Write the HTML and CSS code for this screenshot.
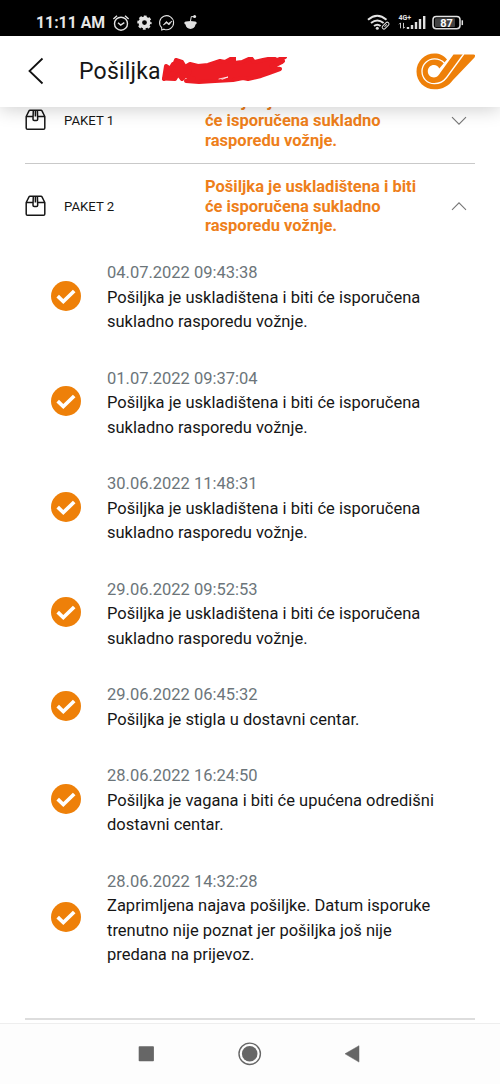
FILE: index.html
```html
<!DOCTYPE html>
<html lang="hr">
<head>
<meta charset="utf-8">
<title>Pošiljka</title>
<link rel="stylesheet" href="styles.css">
</head>
<body>
<svg class="defs" width="0" height="0">
  <symbol id="box" viewBox="0 0 22 22"><path d="M1.2 7.5 4 1.9q.3-.6 1-.6h11q.7 0 1 .6l2.8 5.6v11.5q0 1.3-1.3 1.3h-16q-1.3 0-1.3-1.3zM1.2 7.6h6.9M12.8 7.6h7M8.3 1.5 8 10.2q0 1.2 1.2 1.2h2.3q1.2 0 1.2-1.2L12.4 1.5M10.4 1.5v6" fill="none" stroke="#161616" stroke-width="1.5" stroke-linejoin="round"/></symbol>
  <symbol id="check" viewBox="0 0 30 30"><circle cx="15" cy="15" r="15" fill="#ee8009"/><path d="m6.7 15.2 5.6 5.3L23.2 10" fill="none" stroke="#fff" stroke-width="3.7"/></symbol>
</svg>
<div class="screen">
  <div class="status">
    <span class="clock">11:11 AM</span>
    <svg class="status-left" width="88" height="18" viewBox="0 0 88 18" fill="none" stroke="#e4e4e4">
      <circle cx="9" cy="9.7" r="6.5" stroke-width="1.4"/><path d="m6 8.8 2.7 2.3 3.6-2.5M1.4 5 5 1.8M13 1.8 16.6 5" stroke-width="1.4"/>
      <circle cx="32.5" cy="8.6" r="4.2" stroke-width="3.6"/><circle cx="32.5" cy="8.6" r="6.2" stroke-width="2" stroke-dasharray="2.8 2.07" stroke-dashoffset="1.4"/>
      <path d="M49.7 16v-2.3A7 7 0 1 1 52 15.2z" stroke-width="1.1"/><path d="m51.3 11 3-3.5 2.3 1.8 3.4-2.2-3 3.8-2.3-1.8z" fill="#e4e4e4" stroke-width=".7"/>
      <path d="M72.3 9q0-1.7 1.7-1.6 4.5-1 9 0 1.700-.1 1.700 1.600-.2 1.200-1.200 1.500-.9 4.400-5 4.400t-5-4.400q-1-.3-1.200-1.500z" fill="#e4e4e4" stroke="none"/><circle cx="82.600" cy="2.600" r="1.500" fill="#e4e4e4" stroke="none"/><path d="m78.500 7 .8-4.500 3 .3"/>
    </svg>
    <svg class="status-right" width="100" height="18" viewBox="0 0 100 18" fill="none" stroke="#e4e4e4">
      <path d="M1 5.700q9.200-8 18.500 0M4 9q6.300-5 12.600 0M7 12q3.300-2.600 6.600 0" stroke-width="2"/><circle cx="10.300" cy="14.200" r="1.500" fill="#e4e4e4" stroke="none"/>
      <g transform="rotate(-45 18.600 11.600)"><rect x="14.600" y="9.900" width="8" height="3.400" rx="1.500" fill="#000" stroke-width="1"/><path d="M17 11.600h3.200"/></g>
      <text x="31.500" y="5.800" class="network">4G+</text>
      <path d="M33.500 8.900v5.400m-1.400-4 1.400-1.400M36.500 8.900v5.400l1.400-1.400" stroke-width=".9"/>
      <path d="M41 15v-2M45 15v-4M49 15V8M53 15V5M57.200 15V2" stroke-width="2.400"/>
      <rect x="66" y="2.400" width="27" height="12.400" rx="3.200" stroke-width="1.500"/><rect x="68" y="4.300" width="20" height="8.600" rx="1" fill="#444" stroke="none"/><path d="M95.300 6.300v4.800" stroke-width="1.500"/>
      <text x="79.500" y="12.500" class="battery">87</text>
    </svg>
  </div>
  <header class="header">
    <svg class="back" width="16" height="28" viewBox="0 0 16 28"><path d="M14.500 1.500 1.500 14l13 12.500" fill="none" stroke="#111" stroke-width="1.800"/></svg>
    <h1 class="title">Pošiljka</h1>
    <svg class="scribble" width="126" height="32" viewBox="0 0 126 32" fill="#ed1c24" stroke="#ed1c24" stroke-linecap="round" stroke-linejoin="round" stroke-width="4"><path d="M3 21.500 5 9l6 4 4-10 6 2 3 5 5-3 8 2 10-1 12-4 5 1 9-5 0 6 8-1 9-4 3 4 9-2 10-2 4 2 8-3-9 5 6 0-10 5 8 2-11 4-8 3-13 3-5-1-10 2-18 1-16 1-13-1 8-2-6-2 2-6-8 8-4-5-3 5z"/><path d="m3 22 9-15M110 9l12-5"/><path d="M58 22l9-2-6 2.300" stroke="#fff" stroke-width=".8"/></svg>
    <svg class="logo" width="60" height="37" viewBox="0 0 60 37"><path d="M31 6.500C27.500 2.300 23.800.5 18.500.5A17.800 17.800 0 0 0 .5 18.500c0 10 7.800 17.800 18 17.800 8.400 0 14.200-3.500 18.500-9.300L58.500 4.500q1.500-3-1-3H37.500L25.200 18.500c-2 3-4 6-7.200 6-3.500 0-6.200-2.700-6.200-6.200s2.700-6.200 6.200-6.200c2.400 0 4.300 1.200 5.300 3.400z" fill="#ee8009"/><path d="M28.500 10.200C25.700 7 22.500 5.900 18.500 5.900A12.500 12.500 0 0 0 6 18.300c0 7 5.200 12.400 12.300 12.400 5.700 0 9.500-2.500 12.300-6.200L47.800 1" fill="none" stroke="#fff" stroke-width="1.300"/></svg>
  </header>
  <main class="content">
    <section class="package package-first">
      <svg class="box"><use href="#box"/></svg><span class="name">PAKET 1</span>
      <p class="state">Pošiljka je uskladištena i biti<br>će isporučena sukladno<br>rasporedu vožnje.</p>
      <svg class="chevron" viewBox="0 0 16 10"><path d="m1 1.200 7 7 7-7"/></svg>
    </section>
    <section class="package">
      <svg class="box"><use href="#box"/></svg><span class="name">PAKET 2</span>
      <p class="state">Pošiljka je uskladištena i biti<br>će isporučena sukladno<br>rasporedu vožnje.</p>
      <svg class="chevron" viewBox="0 0 16 10"><path d="m1 8.800 7-7 7 7"/></svg>
    </section>
    <ol class="timeline">
      <li class="event"><svg class="check"><use href="#check"/></svg><div><time>04.07.2022 09:43:38</time><p>Pošiljka je uskladištena i biti će isporučena<br>sukladno rasporedu vožnje.</p></div></li>
      <li class="event"><svg class="check"><use href="#check"/></svg><div><time>01.07.2022 09:37:04</time><p>Pošiljka je uskladištena i biti će isporučena<br>sukladno rasporedu vožnje.</p></div></li>
      <li class="event"><svg class="check"><use href="#check"/></svg><div><time>30.06.2022 11:48:31</time><p>Pošiljka je uskladištena i biti će isporučena<br>sukladno rasporedu vožnje.</p></div></li>
      <li class="event"><svg class="check"><use href="#check"/></svg><div><time>29.06.2022 09:52:53</time><p>Pošiljka je uskladištena i biti će isporučena<br>sukladno rasporedu vožnje.</p></div></li>
      <li class="event"><svg class="check"><use href="#check"/></svg><div><time>29.06.2022 06:45:32</time><p>Pošiljka je stigla u dostavni centar.</p></div></li>
      <li class="event"><svg class="check"><use href="#check"/></svg><div><time>28.06.2022 16:24:50</time><p>Pošiljka je vagana i biti će upućena odredišni<br>dostavni centar.</p></div></li>
      <li class="event"><svg class="check"><use href="#check"/></svg><div><time>28.06.2022 14:32:28</time><p>Zaprimljena najava pošiljke. Datum isporuke<br>trenutno nije poznat jer pošiljka još nije<br>predana na prijevoz.</p></div></li>
    </ol>
  </main>
  <nav class="nav">
    <svg width="500" height="60" viewBox="0 0 500 60" fill="#666"><rect x="138.700" y="22.300" width="15.200" height="15" rx=".8"/><circle cx="249.700" cy="29.800" r="7.800"/><circle cx="249.700" cy="29.800" r="10.700" fill="none" stroke="#666" stroke-width="1.400"/><path d="M345 29.800 359 21.700v16.400z" stroke="#666" stroke-width=".5"/></svg>
  </nav>
</div>
</body>
</html>
```
FILE: styles.css
```css
* { box-sizing: border-box; }
body { margin: 0; background: #fff; font-family: Roboto, "Noto Sans", sans-serif; color: #161616; }
h1, p, ol { margin: 0; padding: 0; font-weight: 400; }
svg { display: block; flex: none; }
.defs { position: absolute; }
.screen { width: 500px; height: 1084px; display: flex; flex-direction: column; overflow: hidden; }
.status { flex: none; height: 36px; background: #000; color: #e8e8e8; display: flex; align-items: flex-start; padding: 13px 0 0 36px; }
.clock { width: 76px; font-size: 15.8px; line-height: 20px; font-weight: 700; white-space: nowrap; }
.status-left { width: 88px; margin-top: 1px; }
.status-right { margin: 1px 0 0 167px; }
.network { font-size: 7px; font-weight: 700; fill: #e4e4e4; stroke: none; }
.battery { font-size: 11px; font-weight: 700; fill: #fff; stroke: none; text-anchor: middle; }
.header { flex: none; height: 71px; display: flex; align-items: flex-start; background: #fff; box-shadow: 0 2px 18px rgba(0,0,0,.2); z-index: 1; padding-left: 28px; }
.back { margin-top: 21px; }
.title { width: 82px; margin: 21px 0 0 35px; font-size: 23px; line-height: 30px; letter-spacing: .2px; white-space: nowrap; }
.scribble { margin-top: 21px; }
.logo { margin: 17px 0 0 129px; }
.content { flex: 1; min-height: 0; padding: 0 25px; }
.package { height: 85px; display: flex; align-items: center; }
.package-first { height: 57px; border-bottom: 1px solid #c9c9c9; align-items: flex-end; }
.box { width: 22px; height: 22px; margin-bottom: 2px; }
.name { width: 141px; margin-left: 17px; font-size: 13.2px; line-height: 20px; }
.state { width: 246px; color: #ee7f1b; font-size: 16.5px; line-height: 19.5px; font-weight: 700; }
.chevron { width: 16px; height: 10px; margin-bottom: 2px; fill: none; stroke: #777; stroke-width: 1.1; }
.package-first .box { margin-bottom: 32px; }
.package-first .name { margin-bottom: 32px; }
.package-first .state { margin-bottom: 13px; }
.package-first .chevron { margin-bottom: 37px; }
.timeline { list-style: none; display: flex; flex-direction: column; gap: 32px; padding: 12px 0 50px 26px; border-bottom: 2px solid #ddd; }
.event { display: flex; align-items: center; gap: 26px; font-size: 16.5px; line-height: 24.5px; white-space: nowrap; }
.event time { display: block; color: #6c757a; }
.check { width: 30px; height: 30px; margin-bottom: 4px; }
.nav { flex: none; height: 61px; border-top: 1px solid #eee; background: #fdfdfd; }
```
